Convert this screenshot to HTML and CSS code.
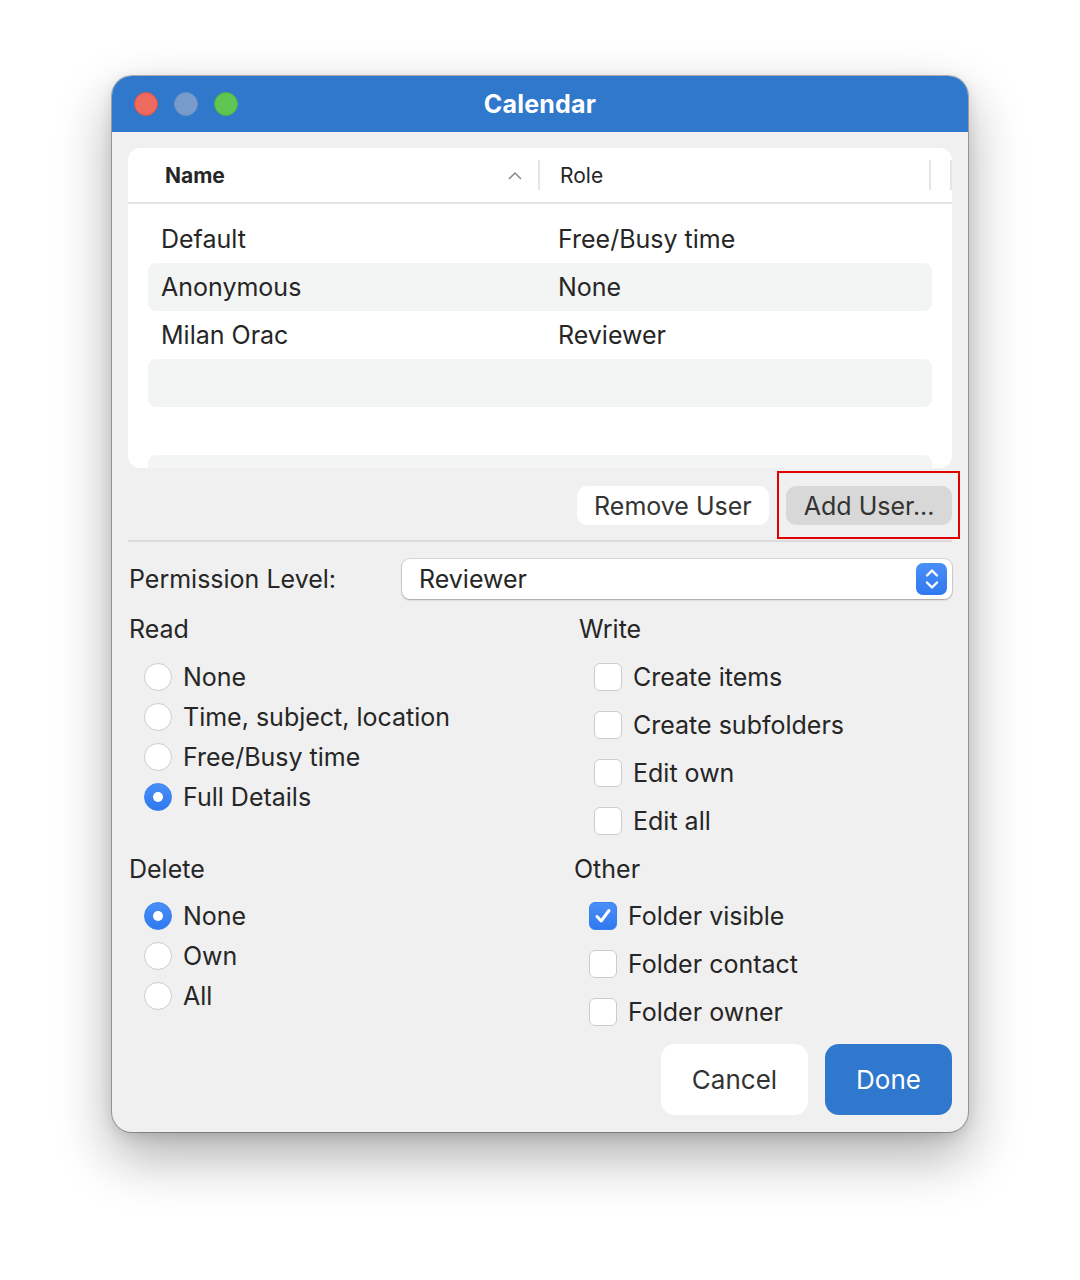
FILE: index.html
```html
<!DOCTYPE html>
<html lang="en">
<head>
    <meta charset="UTF-8">
    <title>Calendar Permissions</title>
    <link rel="stylesheet" href="styles.css">
</head>
<body>
    <div class="window">
        <div class="titlebar">
            <div class="lights">
                <span class="light red"></span>
                <span class="light gray"></span>
                <span class="light green"></span>
            </div>
            <div class="title">Calendar</div>
            <div></div>
        </div>

        <div class="content">
            <!-- user list -->
            <div class="table-panel">
                <div class="table-head">
                    <div class="th th-name">
                        <span>Name</span>
                        <svg class="sort" width="14" height="9" viewBox="0 0 14 9"><path d="M1.5 7.5 L7 2 L12.5 7.5" fill="none" stroke="#8a8a8a" stroke-width="1.6" stroke-linecap="round" stroke-linejoin="round"/></svg>
                    </div>
                    <div class="th th-role">Role</div>
                    <div class="th th-end"></div>
                </div>
                <div class="rows">
                    <div class="row"><span>Default</span><span>Free/Busy time</span></div>
                    <div class="row alt"><span>Anonymous</span><span>None</span></div>
                    <div class="row"><span>Milan Orac</span><span>Reviewer</span></div>
                    <div class="row alt"></div>
                    <div class="row"></div>
                    <div class="row alt"></div>
                </div>
            </div>

            <div class="user-actions">
                <button class="pill-btn">Remove User</button>
                <div class="highlight-wrap">
                    <button class="pill-btn pressed">Add User...</button>
                    <span class="highlight"></span>
                </div>
            </div>

            <div class="separator"></div>

            <div class="perm-row">
                <label>Permission Level:</label>
                <div class="select">
                    <span>Reviewer</span>
                    <span class="stepper">
                        <svg width="18" height="26" viewBox="0 0 18 26"><path d="M4 9.5 L9 4.5 L14 9.5 M4 16.5 L9 21.5 L14 16.5" fill="none" stroke="#fff" stroke-width="2.4" stroke-linecap="round" stroke-linejoin="round"/></svg>
                    </span>
                </div>
            </div>

            <div class="groups">
                <div class="group">
                    <h4>Read</h4>
                    <ul class="radio-list">
                        <li><span class="radio"></span>None</li>
                        <li><span class="radio"></span>Time, subject, location</li>
                        <li><span class="radio"></span>Free/Busy time</li>
                        <li><span class="radio on"></span>Full Details</li>
                    </ul>
                </div>
                <div class="group write">
                    <h4>Write</h4>
                    <ul class="check-list">
                        <li><span class="check"></span>Create items</li>
                        <li><span class="check"></span>Create subfolders</li>
                        <li><span class="check"></span>Edit own</li>
                        <li><span class="check"></span>Edit all</li>
                    </ul>
                </div>
                <div class="group delete">
                    <h4>Delete</h4>
                    <ul class="radio-list">
                        <li><span class="radio on"></span>None</li>
                        <li><span class="radio"></span>Own</li>
                        <li><span class="radio"></span>All</li>
                    </ul>
                </div>
                <div class="group other">
                    <h4>Other</h4>
                    <ul class="check-list">
                        <li><span class="check on"><svg width="20" height="20" viewBox="0 0 20 20"><path d="M4 10.5 L8.2 15 L16 4.5" fill="none" stroke="#fff" stroke-width="3" stroke-linecap="round" stroke-linejoin="round"/></svg></span>Folder visible</li>
                        <li><span class="check"></span>Folder contact</li>
                        <li><span class="check"></span>Folder owner</li>
                    </ul>
                </div>
            </div>

            <div class="footer">
                <button class="big-btn">Cancel</button>
                <button class="big-btn primary">Done</button>
            </div>
        </div>
    </div>
</body>
</html>
```

FILE: styles.css
```css
* {
    margin: 0;
    padding: 0;
    box-sizing: border-box;
}

body {
    font-family: Inter, 'Liberation Sans', sans-serif;
    background: #ffffff;
    color: #262626;
    width: 1080px;
    height: 1280px;
    padding-top: 76px;
    padding-left: 112px;
}

.window {
    width: 856px;
    height: 1056px;
    background: #f0f0f0;
    border-radius: 20px;
    overflow: hidden;
    box-shadow: 0 0 0 1px rgba(0, 0, 0, 0.28), 0 24px 55px rgba(0, 0, 0, 0.32), 0 4px 14px rgba(0, 0, 0, 0.12);
}

.titlebar {
    height: 56px;
    background: #2f78cc;
    display: grid;
    grid-template-columns: 1fr auto 1fr;
    align-items: center;
}

.lights {
    display: flex;
    gap: 16px;
    padding-left: 22px;
}

.light {
    width: 24px;
    height: 24px;
    border-radius: 50%;
    display: block;
}

.light.red {
    background: #ed6a5e;
    border: 1px solid #d5544a;
}

.light.gray {
    background: #779ccb;
    border: 1px solid #6c90be;
}

.light.green {
    background: #61c554;
    border: 1px solid #4fae43;
}

.title {
    color: #fff;
    font-weight: 700;
    font-size: 25px;
    letter-spacing: 0.2px;
}

.content {
    padding: 16px 16px 0 16px;
}

/* user table */
.table-panel {
    background: #fff;
    border-radius: 12px;
    height: 320px;
    overflow: hidden;
}

.table-head {
    height: 56px;
    border-bottom: 2px solid #e3e3e3;
    display: grid;
    grid-template-columns: 412px 391px 21px;
    align-items: center;
}

.th {
    font-size: 21px;
    height: 30px;
    display: flex;
    align-items: center;
}

.th-name {
    font-weight: 700;
    padding-left: 37px;
    padding-right: 16px;
    justify-content: space-between;
    border-right: 2px solid #e6e6e6;
}

.th-role {
    padding-left: 20px;
    border-right: 2px solid #e6e6e6;
}

.th-end {
    border-right: 2px solid #e6e6e6;
}

.rows {
    padding: 11px 20px 0 20px;
}

.row {
    height: 48px;
    border-radius: 8px;
    display: grid;
    grid-template-columns: 397px 1fr;
    align-items: center;
    padding-left: 13px;
    font-size: 25px;
}

.row.alt {
    background: #f3f4f4;
}

/* add / remove */
.user-actions {
    display: flex;
    justify-content: flex-end;
    gap: 17px;
    margin-top: 18px;
}

.pill-btn {
    font-family: inherit;
    font-size: 25px;
    color: #333;
    background: #fff;
    border: none;
    height: 39px;
    padding: 0 17.5px;
    border-radius: 10px;
}

.pill-btn.pressed {
    background: #d8d8d8;
}

.highlight-wrap {
    position: relative;
}

.highlight {
    position: absolute;
    left: -9px;
    right: -8px;
    top: -15px;
    bottom: -14px;
    border: 2px solid #e10000;
}

.separator {
    height: 2px;
    background: #dcdcdc;
    margin-top: 15px;
}

.perm-row {
    display: flex;
    align-items: center;
    margin-top: 17px;
    height: 40px;
}

.perm-row label {
    font-size: 25px;
    width: 274px;
    padding-left: 1px;
}

.select {
    flex: 1;
    height: 40px;
    background: #fff;
    border-radius: 8px;
    box-shadow: 0 0 0 1px rgba(0, 0, 0, 0.1), 0 1px 2px rgba(0, 0, 0, 0.25);
    display: flex;
    align-items: center;
    justify-content: space-between;
    padding: 0 5px 0 17px;
    font-size: 25px;
}

.stepper {
    width: 31px;
    height: 32px;
    border-radius: 7px;
    background: linear-gradient(#4a8ff7, #2f78f0);
    display: flex;
    align-items: center;
    justify-content: center;
}

/* permission groups */
.groups {
    display: grid;
    grid-template-columns: 450px 1fr;
    margin-top: 15px;
}

.group h4 {
    font-weight: 400;
    font-size: 25px;
    height: 30px;
    line-height: 30px;
    padding-left: 1px;
}

.group ul {
    list-style: none;
    margin-top: 13px;
}

.radio-list li {
    height: 40px;
    display: flex;
    align-items: center;
    font-size: 25px;
    padding-left: 16px;
}

.radio {
    width: 28px;
    height: 28px;
    border-radius: 50%;
    background: #fff;
    border: 1px solid #cdcdcd;
    margin-right: 11px;
    display: flex;
    align-items: center;
    justify-content: center;
}

.radio.on {
    background: linear-gradient(#4a8ff7, #2f78f0);
    border-color: #3a82f2;
}

.radio.on::after {
    content: "";
    width: 10px;
    height: 10px;
    border-radius: 50%;
    background: #fff;
}

.check-list li {
    height: 48px;
    display: flex;
    align-items: center;
    font-size: 25px;
    padding-left: 16px;
}

.check {
    width: 28px;
    height: 28px;
    border-radius: 6px;
    background: #fff;
    border: 1px solid #cdcdcd;
    margin-right: 11px;
    display: flex;
    align-items: center;
    justify-content: center;
}

.check.on {
    background: linear-gradient(#4a8ff7, #2f78f0);
    border-color: #3a82f2;
}

.write ul {
    margin-top: 9px;
}

.delete {
    margin-top: 9px;
}

.delete ul {
    margin-top: 12px;
}

.other {
    margin-top: 9px;
    margin-left: -5px;
}

.other ul {
    margin-top: 8px;
}

.footer {
    display: flex;
    justify-content: flex-end;
    gap: 17px;
    margin-top: 8px;
}

.big-btn {
    font-family: inherit;
    font-size: 26px;
    height: 71px;
    border: none;
    border-radius: 14px;
    background: #fff;
    color: #333;
    width: 147px;
}

.big-btn.primary {
    background: #2f78cd;
    color: #fff;
    width: 127px;
}
```
